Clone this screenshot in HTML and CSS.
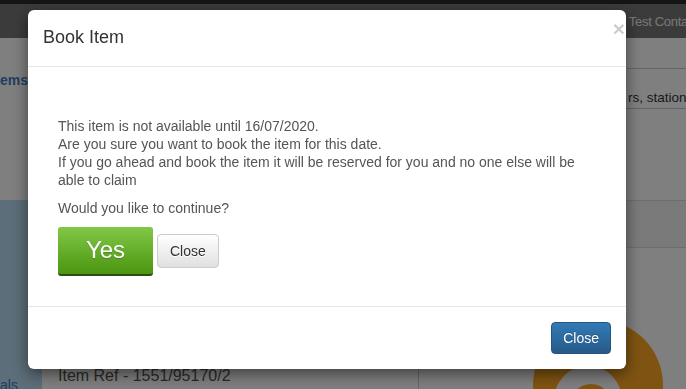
FILE: index.html
```html
<!DOCTYPE html>
<html lang="en">
<head>
    <meta charset="UTF-8">
    <meta name="viewport" content="width=device-width, initial-scale=1.0">
    <title>Book Item</title>
    <link rel="stylesheet" href="styles.css">
</head>
<body>
    <div class="page">
        <div class="topbar"></div>
        <nav class="navbar">
            <span class="user"><span class="user-icon">&#9679;</span> Test Contact</span>
        </nav>
        <div class="intro">
            <div class="intro-title">ems</div>
            <div class="intro-side">
                <div class="intro-row">rs, stationery</div>
            </div>
        </div>
        <div class="lower">
            <div class="sidebar"><span class="sidebar-link">als</span></div>
            <div class="content">
                <div class="band"></div>
                <div class="detail">
                    <div class="detail-info">Item Ref - 1551/95170/2</div>
                    <div class="detail-side">
                        <svg class="logo" width="140" height="80" viewBox="0 0 140 80">
                            <circle cx="65" cy="65" r="65" fill="#ffa824"/>
                            <circle cx="55" cy="80" r="34" fill="#fff"/>
                            <circle cx="58" cy="84" r="20" fill="#ffa824"/>
                        </svg>
                    </div>
                </div>
            </div>
        </div>
    </div>

    <div class="backdrop"></div>

    <div class="modal">
        <div class="modal-header">
            <h4 class="modal-title">Book Item</h4>
            <button class="close">&times;</button>
        </div>
        <div class="modal-body">
            <div class="confirm">
                <p>This item is not available until 16/07/2020.<br>
                Are you sure you want to book the item for this date.<br>
                If you go ahead and book the item it will be reserved for you and no one else will be able to claim</p>
                <p>Would you like to continue?</p>
                <div class="confirm-actions">
                    <button class="btn-yes">Yes</button>
                    <button class="btn btn-default">Close</button>
                </div>
            </div>
        </div>
        <div class="modal-footer">
            <button class="btn btn-primary">Close</button>
        </div>
    </div>
</body>
</html>
```

FILE: styles.css
```css
body {
    font-family: 'Liberation Sans', Arial, Helvetica, sans-serif;
    font-size: 14px;
    color: #333;
    margin: 0;
    height: 389px;
    overflow: hidden;
    background-color: #fff;
}
.topbar {
    height: 4px;
    background-color: #2a2a2a;
}
.navbar {
    height: 34px;
    background-color: #777;
    display: flex;
    align-items: center;
    padding-left: 620px;
    white-space: nowrap;
    overflow: hidden;
}
.user {
    color: #eee;
    font-size: 13px;
    letter-spacing: -0.3px;
}
.user-icon {
    color: #f0a030;
    font-size: 10px;
}
.intro {
    height: 162px;
    display: flex;
    justify-content: space-between;
}
.intro-title {
    padding-top: 34px;
    font-size: 14px;
    font-weight: bold;
    color: #3d7fbd;
}
.intro-side {
    width: 60px;
    padding-top: 30px;
    overflow: hidden;
}
.intro-row {
    border-top: 1px solid #ccc;
    border-bottom: 1px solid #ccc;
    height: 39px;
    line-height: 58px;
    padding-left: 2px;
    font-size: 13.5px;
    white-space: nowrap;
    color: #333;
}
.lower {
    display: grid;
    grid-template-columns: 42px 1fr;
    height: 189px;
}
.sidebar {
    background-color: #b8dcf2;
    display: flex;
    align-items: flex-end;
}
.sidebar-link {
    color: #3d7fbd;
    font-size: 14px;
    margin-bottom: -4px;
}
.band {
    height: 46px;
    background-color: #f4f4f4;
    border-top: 1px solid #ddd;
    border-bottom: 1px solid #ddd;
}
.detail {
    display: grid;
    grid-template-columns: 376px 1fr;
    height: 141px;
}
.detail-info {
    display: flex;
    align-items: flex-end;
    padding: 0 0 4px 16px;
    font-size: 16px;
    color: #555;
}
.detail-side {
    border-left: 1px solid #ccc;
    overflow: hidden;
}
.logo {
    display: block;
    margin: 72px 0 0 114px;
}
.backdrop {
    position: fixed;
    top: 0;
    left: 0;
    right: 0;
    bottom: 0;
    background-color: rgba(0, 0, 0, 0.5);
}
.modal {
    position: fixed;
    top: 10px;
    left: 28px;
    width: 598px;
    background-color: #fff;
    border-radius: 6px;
    box-shadow: 0 5px 15px rgba(0, 0, 0, 0.5);
}
.modal-header {
    position: relative;
    padding: 15px;
    border-bottom: 1px solid #e5e5e5;
}
.modal-title {
    margin: 0;
    font-size: 18px;
    font-weight: normal;
    line-height: 1.42857;
    color: #333;
}
.close {
    position: absolute;
    top: 8px;
    right: 1px;
    padding: 0;
    border: none;
    background: none;
    font-family: inherit;
    font-size: 21px;
    font-weight: bold;
    line-height: 1;
    color: #000;
    opacity: 0.2;
}
.modal-body {
    padding: 15px;
}
.confirm {
    padding: 35px 15px 15px;
    color: #555;
}
.confirm p {
    margin: 0 0 10px;
    line-height: 18px;
}
.confirm-actions {
    display: flex;
    align-items: center;
    gap: 4px;
}
.btn-yes {
    height: 49px;
    width: 95px;
    padding: 0;
    border: none;
    border-bottom: 2px solid #2d4d14;
    border-radius: 3px;
    background-image: linear-gradient(to bottom, #80c846, #4c9510);
    color: #fff;
    font-family: inherit;
    font-size: 24px;
    text-shadow: 0 1px 1px rgba(0, 0, 0, 0.2);
}
.btn {
    padding: 6px 12px;
    font-family: inherit;
    font-size: 14px;
    line-height: 20px;
    border: 1px solid transparent;
    border-radius: 4px;
}
.btn-default {
    color: #333;
    border-color: #ccc;
    background-image: linear-gradient(to bottom, #fff, #e0e0e0);
    text-shadow: 0 1px 0 #fff;
}
.modal-footer {
    padding: 15px;
    text-align: right;
    border-top: 1px solid #e5e5e5;
}
.btn-primary {
    padding: 6px 11px;
    line-height: 18px;
    color: #fff;
    border-color: #245580;
    background-image: linear-gradient(to bottom, #337ab7, #265a88);
    text-shadow: 0 -1px 0 rgba(0, 0, 0, 0.2);
}
```
